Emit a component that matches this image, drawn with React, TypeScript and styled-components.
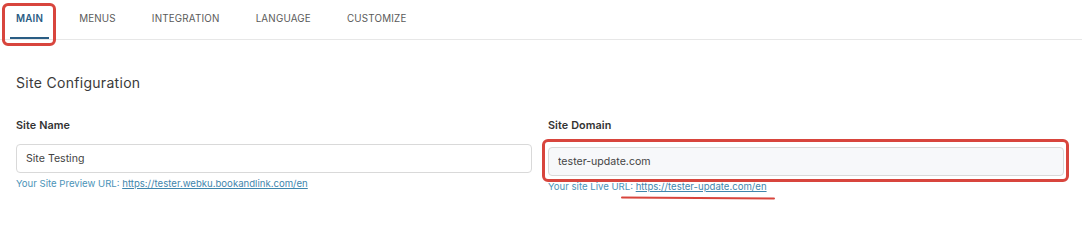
import * as React from 'react';
import styled, { createGlobalStyle, css } from 'styled-components';

const GlobalStyle = createGlobalStyle`
    html, body {
        margin: 0;
        padding: 0;
        background: #ffffff;
    }

    body {
        font-family: Inter, "Open Sans", "Liberation Sans", sans-serif;
        color: #333;
    }
`

const tabs = ['MAIN', 'MENUS', 'INTEGRATION', 'LANGUAGE', 'CUSTOMIZE'];

const App = () => {
    return (
        <Page>
            <GlobalStyle />
            <Tabs.Bar>
                {tabs.map((t, i) => (
                    <Tabs.Item key={t} $active={i === 0} $marked={i === 0}>
                        {t}
                    </Tabs.Item>
                ))}
            </Tabs.Bar>

            <Body>
                <Title>Site Configuration</Title>

                <Fields>
                    <Field.Column>
                        <Field.Label>Site Name</Field.Label>
                        <Field.Box>
                            <Field.Input defaultValue="Site Testing" />
                        </Field.Box>
                        <Field.Help>
                            Your Site Preview URL: <a href="#">https://tester.webku.bookandlink.com/en</a>
                        </Field.Help>
                    </Field.Column>

                    <Field.Column $shift={3}>
                        <Field.Label>Site Domain</Field.Label>
                        <Field.Box $marked>
                            <Field.Input defaultValue="tester-update.com" $filled />
                        </Field.Box>
                        <Field.Help>
                            Your site Live URL: <Field.Marked href="#">https://tester-update.com/en</Field.Marked>
                        </Field.Help>
                    </Field.Column>
                </Fields>
            </Body>
        </Page>
    )
}

export default App;

const Page = styled.div`
    width: 1082px;
    height: 209px;
    overflow: hidden;
`

// red annotation frame drawn over a part
const redFrame = css`
    content: '';
    position: absolute;
    border: 3px solid #d8453d;
    border-radius: 6px;
    pointer-events: none;
`

const Tabs = {
    Bar: styled.div`
        display: flex;
        align-items: stretch;
        height: 39px;
        padding-left: 10px;
        gap: 24px;
        border-bottom: 1px solid #e7e7e7;
    `,

    Item: styled.div<{ $active?: boolean; $marked?: boolean }>`
        position: relative;
        display: flex;
        align-items: center;
        padding: 0 6px 2px;
        font-size: 9.8px;
        font-weight: ${p => (p.$active ? 600 : 400)};
        color: ${p => (p.$active ? '#2a5d84' : '#5a5a5a')};
        letter-spacing: 0.2px;

        ${p => p.$active && css`
            &::before {
                content: '';
                position: absolute;
                left: 0;
                right: 0;
                bottom: 0;
                height: 2px;
                background: #2a5d84;
            }
        `}

        ${p => p.$marked && css`
            &::after {
                ${redFrame};
                left: -8px;
                right: -7px;
                top: 3px;
                bottom: -7px;
            }
        `}
    `,
}

const Body = styled.div`
    padding: 35px 18px 0 16px;
`

const Title = styled.h2`
    margin: 0 0 28px;
    font-size: 14px;
    font-weight: 400;
    color: #3a3a3a;
    line-height: 16px;
    letter-spacing: 0.3px;
`

const Fields = styled.div`
    display: grid;
    grid-template-columns: 1fr 1fr;
    gap: 16px;
`

const Field = {
    Column: styled.div<{ $shift?: number }>`
        display: flex;
        flex-direction: column;

        & > label {
            margin-bottom: ${p => 11 + (p.$shift || 0)}px;
        }
    `,

    Label: styled.label`
        font-size: 10.8px;
        font-weight: 600;
        color: #333;
        line-height: 14px;
        letter-spacing: 0.1px;
    `,

    Box: styled.div<{ $marked?: boolean }>`
        position: relative;

        ${p => p.$marked && css`
            &::after {
                ${redFrame};
                left: -6px;
                right: -5px;
                top: -8px;
                bottom: -6px;
            }
        `}
    `,

    Input: styled.input<{ $filled?: boolean }>`
        box-sizing: border-box;
        width: 100%;
        height: 29px;
        padding: 0 9px;
        border: 1px solid #d9d9d9;
        border-radius: 4px;
        background: ${p => (p.$filled ? '#f7f8fa' : '#ffffff')};
        font-family: inherit;
        font-size: 10.6px;
        color: #444;
        outline: none;
    `,

    Help: styled.div`
        margin-top: 5px;
        font-size: 9.6px;
        line-height: 12px;
        color: #4b93b8;

        a {
            color: #3f86ad;
            text-decoration: underline;
        }
    `,

    Marked: styled.a`
        position: relative;

        &::after {
            content: '';
            position: absolute;
            left: -15px;
            right: -8px;
            bottom: -7px;
            height: 2px;
            border-radius: 2px;
            background: #d8453d;
            transform: rotate(0.4deg);
        }
    `,
}
